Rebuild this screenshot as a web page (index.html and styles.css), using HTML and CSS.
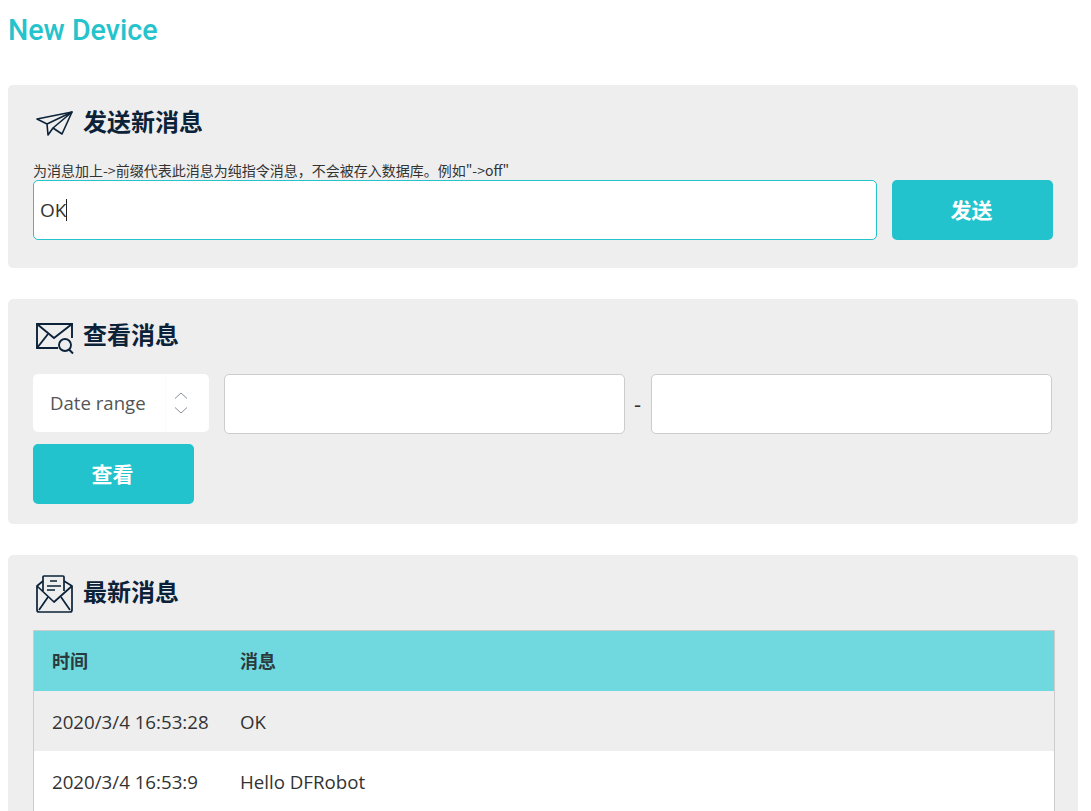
FILE: index.html
```html
<!DOCTYPE html>
<html lang="zh">
<head>
<meta charset="utf-8">
<title>New Device</title>
<link rel="stylesheet" href="styles.css">
</head>
<body>
<h1 class="page-title">New Device</h1>

<section class="card card-send">
  <h2 class="card-head">
    <svg class="icon" viewBox="0 0 38 32" fill="none" stroke="#0b2238" stroke-width="1.6" stroke-linejoin="round"><path d="M2 13L37 6L27 28L18 22L13 29L12 18Z"/><path d="M12 18L37 6L18 22"/></svg>
    发送新消息
  </h2>
  <p class="hint">为消息加上-&gt;前缀代表此消息为纯指令消息，不会被存入数据库。例如"-&gt;off"</p>
  <div class="send-row">
    <div class="input input-active"><span class="typed">OK</span><span class="caret"></span></div>
    <button class="btn btn-send">发送</button>
  </div>
</section>

<section class="card card-view">
  <h2 class="card-head card-head-up">
    <svg class="icon" viewBox="0 0 38 32" fill="none" stroke="#0b2238" stroke-width="1.9"><path d="M23 28H2V4H37V18"/><path d="M2 4L19 18L37 4"/><path d="M2 28L13 14"/><circle cx="30" cy="25" r="6"/><path d="M34 29.5L38 33.5"/></svg>
    查看消息
  </h2>
  <div class="filter-row">
    <div class="select">
      <span class="select-label">Date range</span>
      <span class="select-arrows">
        <svg class="chev" viewBox="0 0 14 7" fill="none" stroke="#8a8f98" stroke-width="1"><path d="M1 6.5L7 1L13 6.5"/></svg>
        <svg class="chev" viewBox="0 0 14 7" fill="none" stroke="#8a8f98" stroke-width="1"><path d="M1 .5L7 6L13 .5"/></svg>
      </span>
    </div>
    <div class="input input-date"></div>
    <span class="dash">-</span>
    <div class="input input-date"></div>
  </div>
  <button class="btn btn-view">查看</button>
</section>

<section class="card card-latest">
  <h2 class="card-head">
    <svg class="icon" viewBox="0 0 38 32" fill="none" stroke="#0b2238" stroke-width="1.7" stroke-linejoin="round"><path d="M2 10V34Q2 36 4 36H35Q37 36 37 34V10L29 5"/><path d="M8 5L2 10L19 26L37 10"/><path d="M8 15V1Q8 0 9 0H28Q29 0 29 1V15"/><path d="M15 5H22M12 10H26M12 14H20"/><path d="M4 34L13 21M35 34L26 21"/></svg>
    最新消息
  </h2>
  <table class="msgs">
    <thead>
      <tr><th class="col-time">时间</th><th>消息</th></tr>
    </thead>
    <tbody>
      <tr class="odd"><td>2020/3/4 16:53:28</td><td>OK</td></tr>
      <tr><td>2020/3/4 16:53:9</td><td>Hello DFRobot</td></tr>
    </tbody>
  </table>
</section>
</body>
</html>
```

FILE: styles.css
```css
html, body { height: 811px; overflow: hidden; }
body {
  margin: 0;
  padding: 0 13px 0 8px;
  background: #fff;
  font-family: "Open Sans", "Noto Sans CJK SC", sans-serif;
  color: #333;
}
.page-title {
  margin: 0;
  padding-top: 12px;
  height: 85px;
  box-sizing: border-box;
  font-family: Roboto, sans-serif;
  font-size: 28.6px;
  line-height: 36px;
  font-weight: 500;
  color: #25c3cc;
}
.card {
  background: #eee;
  border-radius: 5px;
  padding: 21px 25px 0;
  margin-bottom: 31px;
  box-sizing: border-box;
}
.card-send { height: 183px; }
.card-view { height: 225px; }
.card-latest { height: 400px; margin-bottom: 0; }
.card-head {
  margin: 0;
  display: flex;
  align-items: flex-start;
  gap: 10px;
  height: 32px;
  font-family: "Noto Sans CJK SC", sans-serif;
  font-size: 24px;
  font-weight: 700;
  color: #0b2238;
  line-height: 30px;
}
.card-head-up { line-height: 28px; }
.icon { width: 38px; height: 32px; flex: none; margin-left: 2px; overflow: visible; }
.hint {
  margin: 23px 0 0;
  font-family: "Noto Sans CJK SC", sans-serif;
  font-size: 14px;
  line-height: 19px;
  height: 19px;
  color: #333;
  white-space: nowrap;
}
.send-row { display: flex; gap: 15px; width: 1020px; }
.input {
  background: #fff;
  border: 1px solid #ccc;
  border-radius: 5px;
  height: 60px;
  box-sizing: border-box;
}
.input-active {
  flex: 1;
  border-color: #25c3cc;
  display: flex;
  align-items: center;
  padding-left: 6px;
  font-size: 19px;
  color: #333;
}
.caret { width: 1px; height: 22px; background: #222; }
.btn {
  border: 0;
  border-radius: 5px;
  background: #22c3cc;
  color: #fff;
  font-family: "Noto Sans CJK SC", sans-serif;
  font-size: 21px;
  font-weight: 700;
  height: 60px;
  padding: 0 2px 2px 0;
}
.btn-send { width: 161px; flex: none; }
.btn-view { width: 161px; display: block; margin-top: 10px; }
.filter-row {
  display: flex;
  align-items: flex-start;
  margin-top: 22px;
  width: 1019px;
}
.select {
  display: flex;
  width: 176px;
  height: 58px;
  background: #fff;
  border-radius: 5px;
  flex: none;
  align-items: center;
  font-size: 18.6px;
  color: #555;
}
.select-label { flex: none; width: 132px; padding: 0 0 2px 17px; box-sizing: border-box; }
.select-arrows {
  display: flex;
  flex-direction: column;
  gap: 8px;
  align-items: center;
  flex: 1;
  height: 100%;
  justify-content: center;
  padding-right: 14px;
  border-left: 1px solid #fafafa;
}
.chev { width: 14px; height: 7px; }
.input-date { flex: 1; margin-left: 15px; }
.dash { width: 0; margin-left: 9px; margin-right: 2px; font-size: 22px; line-height: 58px; color: #333; }
.msgs {
  margin-top: 22px;
  width: 1022px;
  border-collapse: separate;
  border-spacing: 0;
  border: 1px solid #ccc;
  font-size: 18.7px;
  color: #333;
  table-layout: fixed;
}
.msgs th, .msgs td { box-sizing: border-box; height: 60px; }
.msgs th {
  background: #70d9df;
  padding: 0 18px 2px;
  text-align: left;
  font-family: "Noto Sans CJK SC", sans-serif;
  font-size: 18px;
  font-weight: 700;
  color: #2b3a3c;
}
.msgs th.col-time { width: 188px; }
.msgs td { padding: 0 18px; background: #fff; white-space: nowrap; }
.msgs tr.odd td { background: #eee; }
```
